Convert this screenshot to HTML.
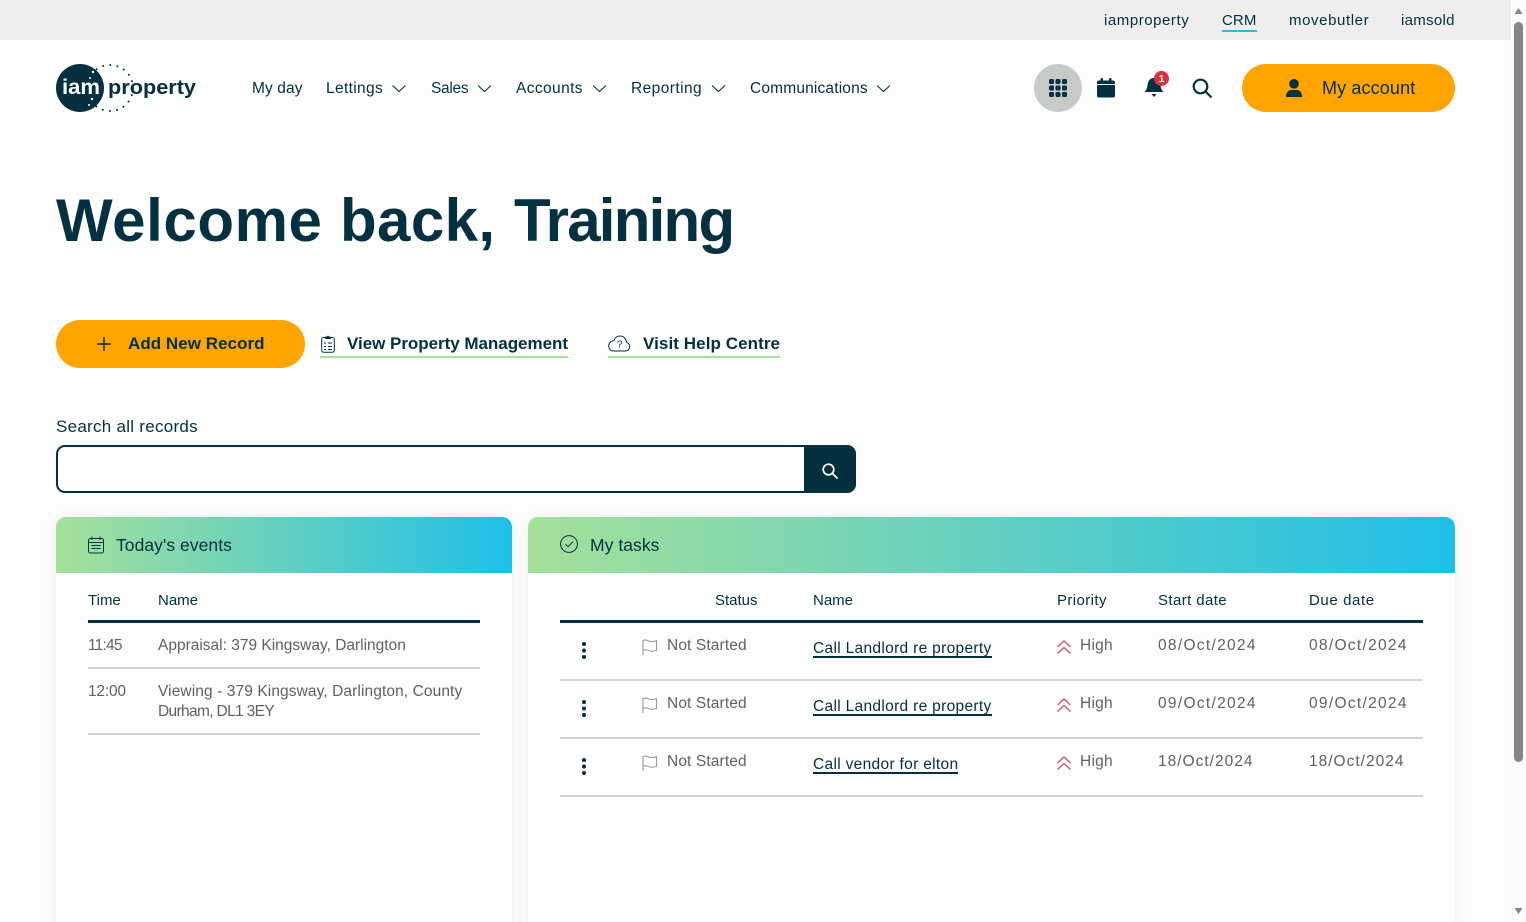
<!DOCTYPE html>
<html><head><meta charset="utf-8"><title>iam property</title>
<style>
html,body{margin:0;padding:0;width:1526px;height:922px;overflow:hidden;background:#fdfdfd}
body{position:relative;font-family:"Liberation Sans",sans-serif;color:#05303f;font-size:16px}
.t{position:absolute;white-space:nowrap;line-height:20px}
.a{position:absolute}
svg{position:absolute;overflow:visible}
.g{color:#5f6163;font-size:15.5px}
.card{position:absolute;top:517px;height:420px;background:#fdfdfd;border-radius:10px 10px 0 0;box-shadow:0 0 12px rgba(0,0,0,.07)}
.head{position:absolute;left:0;right:0;top:0;height:56px;border-radius:10px 10px 0 0;background:linear-gradient(90deg,#a6e09a,#1fbfe8)}
.l{position:absolute;height:2px;background:#d4d4d4}
.k{position:absolute;height:3px;background:#05303f}
.u{position:absolute;border-bottom:2px solid #05303f;white-space:nowrap;line-height:20px;font-size:15.5px;height:17px;color:#05303f;letter-spacing:.32px}
.n{font-size:15.5px}
.b{font-weight:bold}
.h{top:181px;font-size:60px;line-height:80px}
</style></head><body>
<div class="a" style="left:0;top:0;width:1511px;height:40px;background:#eeeeee"></div>
<div class="a" style="left:1511px;top:0;width:15px;height:922px;background:#fbfbfb"></div>
<div class="a" style="left:1514px;top:22px;width:9px;height:740px;background:#858585;border-radius:5px"></div>
<svg style="left:1511px;top:0" width="15" height="922"><path d="M7.5 8l4 6h-8z" fill="#858585"/><path d="M7.5 914l4-6h-8z" fill="#858585"/></svg>

<span class="t" style="left:1104px;top:11px;font-size:15px;letter-spacing:.55px">iamproperty</span>
<span class="t" style="left:1222px;top:11px;font-size:15px;letter-spacing:.1px">CRM</span>
<div class="a" style="left:1222px;top:30px;width:35px;height:2px;background:#1fbfe8"></div>
<span class="t" style="left:1289px;top:11px;font-size:15px;letter-spacing:.6px">movebutler</span>
<span class="t" style="left:1401px;top:11px;font-size:15px;letter-spacing:.3px">iamsold</span>

<!-- logo -->
<svg style="left:56px;top:62px" width="145" height="52">
<circle cx="54" cy="26" r="23" fill="none" stroke="#05303f" stroke-width="1.9" stroke-linecap="round" stroke-dasharray="0.1 7.13"/>
<circle cx="24" cy="26" r="24" fill="#05303f"/>
<g fill="#fff"><circle cx="37" cy="10" r="1.2"/><circle cx="34" cy="16" r="1"/><circle cx="36" cy="37" r="1.2"/><circle cx="33" cy="43" r="1"/></g>
<text x="6" y="32" font-family="Liberation Sans" font-size="21" font-weight="bold" fill="#fff" textLength="38" lengthAdjust="spacingAndGlyphs">iam</text>
<text x="52" y="32" font-family="Liberation Sans" font-size="20" font-weight="bold" fill="#05303f" textLength="88" lengthAdjust="spacingAndGlyphs">property</text>
</svg>

<!-- nav -->
<span class="t n" style="left:252px;top:79px;letter-spacing:.1px">My day</span>
<span class="t n" style="left:326px;top:79px;letter-spacing:.35px">Lettings</span>
<span class="t n" style="left:431px;top:79px;letter-spacing:-.3px">Sales</span>
<span class="t n" style="left:516px;top:79px;letter-spacing:.4px">Accounts</span>
<span class="t n" style="left:631px;top:79px;letter-spacing:.43px">Reporting</span>
<span class="t n" style="left:750px;top:79px;letter-spacing:.17px">Communications</span>
<svg style="left:0;top:0" width="1000" height="120" fill="none" stroke="#05303f" stroke-width="1.1">
<path d="M392.500 85.500l6.500 6 6.500-6M478 85.500l6.500 6 6.500-6M593 85.500l6.500 6 6.500-6M712 85.500l6.500 6 6.500-6M877 85.500l6.500 6 6.500-6"/>
</svg>

<!-- right icons -->
<div class="a" style="left:1034px;top:64px;width:48px;height:48px;border-radius:50%;background:#c8c9c9"></div>
<svg style="left:1049px;top:79px" width="18" height="18" fill="#05303f">
<rect x="0" y="0" width="5" height="5" rx="1.500"/><rect x="6.500" y="0" width="5" height="5" rx="1.500"/><rect x="13" y="0" width="5" height="5" rx="1.500"/>
<rect x="0" y="6.500" width="5" height="5" rx="1.500"/><rect x="6.500" y="6.500" width="5" height="5" rx="1.500"/><rect x="13" y="6.500" width="5" height="5" rx="1.500"/>
<rect x="0" y="13" width="5" height="5" rx="1.500"/><rect x="6.500" y="13" width="5" height="5" rx="1.500"/><rect x="13" y="13" width="5" height="5" rx="1.500"/>
</svg>
<svg style="left:1097px;top:78px" width="18" height="20" fill="#05303f">
<rect x="0" y="2.500" width="18" height="17" rx="2"/><rect x="3.500" y="0" width="2.500" height="5" rx="1"/><rect x="12" y="0" width="2.500" height="5" rx="1"/><rect x="0" y="6" width="18" height="1" fill="#fdfdfd"/>
</svg>
<svg style="left:1144px;top:70px" width="26" height="30">
<path d="M10 8c-4 0-6 3-6.500 7-.3 3-1 5-3 7h19c-2-2-2.700-4-3-7-.5-4-2.500-7-6.500-7z" fill="#05303f"/><path d="M7.500 24h5l-2.500 3z" fill="#05303f"/>
<circle cx="17.500" cy="8.500" r="7.500" fill="#d8323f"/>
<text x="17.500" y="12" font-family="Liberation Sans" font-size="10" font-weight="bold" fill="#fff" text-anchor="middle">1</text>
</svg>
<svg style="left:1192px;top:78px" width="21" height="21" fill="none" stroke="#05303f" stroke-width="2.200"><circle cx="8.500" cy="8.500" r="6.800"/><path d="M13.500 13.500l6 6"/></svg>

<div class="a" style="left:1242px;top:64px;width:213px;height:48px;border-radius:24px;background:#ffa400"></div>
<svg style="left:1285px;top:79px" width="18" height="18" fill="#05303f"><circle cx="9" cy="4.800" r="4.800"/><path d="M1 18c0-4.500 2.500-7 5-7h6c2.500 0 5 2.500 5 7z"/></svg>
<span class="t" style="left:1322px;top:78px;font-size:18px;letter-spacing:.13px">My account</span>

<!-- heading -->
<span class="t b h" style="left:56px;letter-spacing:.6px">Welcome</span>
<span class="t b h" style="left:340px;letter-spacing:.4px">back,</span>
<span class="t b h" style="left:514px;letter-spacing:-1.75px">Training</span>

<!-- actions -->
<div class="a" style="left:56px;top:320px;width:249px;height:48px;border-radius:24px;background:#ffa400"></div>
<svg style="left:96px;top:336px" width="16" height="16" stroke="#05303f" stroke-width="1.400"><path d="M8 1v14M1 8h14"/></svg>
<span class="t b" style="left:128px;top:334px;font-size:17px;letter-spacing:.04px">Add New Record</span>

<svg style="left:321px;top:335px" width="14" height="18" fill="none" stroke="#05303f" stroke-width="1"><rect x=".7" y="2.500" width="12.600" height="14.800" rx="2"/><path d="M4.500 3.500V2.200h1.500a1 1 0 0 1 2 0h1.500v1.300zM3 8h2M7 8h4M3 11.500h2M7 11.500h4M3 14.500h2M7 14.500h4" /></svg>
<span class="t b" style="left:347px;top:334px;font-size:17px;letter-spacing:-.03px">View Property Management</span>
<div class="a" style="left:320px;top:356px;width:248px;height:2px;background:#a6e09a"></div>

<svg style="left:608px;top:335px" width="23" height="17" fill="none" stroke="#05303f" stroke-width="1"><path d="M5.500 16h12a4.500 4.500 0 0 0 1-8.800C18 3.500 15.500 1 12 1 8.800 1 6.800 3 6 5.500 3 5.800.7 8 .7 11c0 2.800 2 5 4.800 5z"/><text x="11.700" y="12.500" font-family="Liberation Sans" font-size="10" fill="#05303f" stroke="none" text-anchor="middle">?</text></svg>
<span class="t b" style="left:643px;top:334px;font-size:17px;letter-spacing:.08px">Visit Help Centre</span>
<div class="a" style="left:608px;top:356px;width:172px;height:2px;background:#a6e09a"></div>

<!-- search -->
<span class="t" style="left:56px;top:417px;font-size:17px;letter-spacing:.27px">Search all records</span>
<div class="a" style="left:56px;top:445px;width:800px;height:48px;box-sizing:border-box;border:2px solid #05303f;border-radius:9px;background:#fff"></div>
<div class="a" style="left:804px;top:445px;width:52px;height:48px;background:#05303f;border-radius:0 9px 9px 0"></div>
<svg style="left:822px;top:463px" width="16" height="16" fill="none" stroke="#fff" stroke-width="1.700"><circle cx="6.500" cy="6.500" r="5.300"/><path d="M10.500 10.500l5 5"/></svg>

<!-- events card -->
<div class="card" style="left:56px;width:456px"><div class="head"></div></div>
<svg style="left:88px;top:536px" width="16" height="18" fill="none" stroke="#05303f" stroke-width="1"><rect x=".5" y="2.500" width="15" height="14.500" rx="2"/><path d="M.5 6.500h15M4 .5v3.500M12 .5v3.500M3.500 9.500h9M3.500 12.500h9"/></svg>
<span class="t" style="left:116px;top:535px;font-size:17.5px;letter-spacing:.05px">Today's events</span>
<span class="t" style="left:88px;top:591px;font-size:15px">Time</span>
<span class="t" style="left:158px;top:591px;font-size:15px">Name</span>
<div class="k" style="left:88px;top:620px;width:392px"></div>
<span class="t g" style="left:88px;top:636px;letter-spacing:-.8px">11:45</span>
<span class="t g" style="left:158px;top:636px">Appraisal: 379 Kingsway, Darlington</span>
<div class="l" style="left:88px;top:667px;width:392px"></div>
<span class="t g" style="left:88px;top:682px;letter-spacing:-.2px">12:00</span>
<span class="t g" style="left:158px;top:682px;letter-spacing:.1px">Viewing - 379 Kingsway, Darlington, County</span>
<span class="t g" style="left:158px;top:702px;letter-spacing:-.65px">Durham, DL1 3EY</span>
<div class="l" style="left:88px;top:733px;width:392px"></div>

<!-- tasks card -->
<div class="card" style="left:528px;width:927px"><div class="head"></div></div>
<svg style="left:560px;top:535px" width="18" height="18" fill="none" stroke="#05303f" stroke-width="1"><circle cx="9" cy="9" r="8.400"/><path d="M5.500 9.200l2.500 2.500 5-5"/></svg>
<span class="t" style="left:590px;top:535px;font-size:17.5px;letter-spacing:.05px">My tasks</span>
<span class="t" style="left:715px;top:591px;font-size:15px">Status</span>
<span class="t" style="left:813px;top:591px;font-size:15px">Name</span>
<span class="t" style="left:1057px;top:591px;font-size:15px;letter-spacing:.4px">Priority</span>
<span class="t" style="left:1158px;top:591px;font-size:15px;letter-spacing:.4px">Start date</span>
<span class="t" style="left:1309px;top:591px;font-size:15px;letter-spacing:.6px">Due date</span>
<div class="k" style="left:560px;top:620px;width:863px"></div>

<svg style="left:0;top:0" width="1500" height="922">
<g fill="#05303f"><circle cx="584" cy="644" r="2"/><circle cx="584" cy="650.500" r="2"/><circle cx="584" cy="657" r="2"/>
<circle cx="584" cy="702" r="2"/><circle cx="584" cy="708.500" r="2"/><circle cx="584" cy="715" r="2"/>
<circle cx="584" cy="760" r="2"/><circle cx="584" cy="766.500" r="2"/><circle cx="584" cy="773" r="2"/></g>
<g fill="none" stroke="#9a9a9a" stroke-width="1.100">
<path d="M643 655v-14.500c4-1.500 5 1 8.500 1 2 0 3.500-.3 5-.7v9.700c-1.500.4-3 .7-5 .7-3.500 0-4.500-2.500-8.500-1"/>
<path d="M643 713v-14.500c4-1.500 5 1 8.500 1 2 0 3.500-.3 5-.7v9.700c-1.500.4-3 .7-5 .7-3.500 0-4.500-2.500-8.500-1"/>
<path d="M643 771v-14.500c4-1.500 5 1 8.500 1 2 0 3.500-.3 5-.7v9.700c-1.500.4-3 .7-5 .7-3.500 0-4.500-2.500-8.500-1"/>
</g>
<g fill="none" stroke="#c9606c" stroke-width="1.500">
<path d="M1057.500 647l6.500-6 6.500 6M1057.500 653.500l6.500-6 6.500 6"/>
<path d="M1057.500 705l6.500-6 6.500 6M1057.500 711.500l6.500-6 6.500 6"/>
<path d="M1057.500 763l6.500-6 6.500 6M1057.500 769.500l6.500-6 6.500 6"/>
</g>
</svg>

<span class="t g" style="left:667px;top:636px;letter-spacing:.12px">Not Started</span>
<span class="u" style="left:813px;top:639px">Call Landlord re property</span>
<span class="t g" style="left:1080px;top:636px;letter-spacing:.25px">High</span>
<span class="t g" style="left:1158px;top:636px;letter-spacing:1.3px">08/Oct/2024</span>
<span class="t g" style="left:1309px;top:636px;letter-spacing:1.3px">08/Oct/2024</span>
<div class="l" style="left:560px;top:679px;width:863px"></div>

<span class="t g" style="left:667px;top:694px;letter-spacing:.12px">Not Started</span>
<span class="u" style="left:813px;top:697px">Call Landlord re property</span>
<span class="t g" style="left:1080px;top:694px;letter-spacing:.25px">High</span>
<span class="t g" style="left:1158px;top:694px;letter-spacing:1.3px">09/Oct/2024</span>
<span class="t g" style="left:1309px;top:694px;letter-spacing:1.3px">09/Oct/2024</span>
<div class="l" style="left:560px;top:737px;width:863px"></div>

<span class="t g" style="left:667px;top:752px;letter-spacing:.12px">Not Started</span>
<span class="u" style="left:813px;top:755px">Call vendor for elton</span>
<span class="t g" style="left:1080px;top:752px;letter-spacing:.25px">High</span>
<span class="t g" style="left:1158px;top:752px;letter-spacing:1px">18/Oct/2024</span>
<span class="t g" style="left:1309px;top:752px;letter-spacing:1px">18/Oct/2024</span>
<div class="l" style="left:560px;top:795px;width:863px"></div>
</body></html>
